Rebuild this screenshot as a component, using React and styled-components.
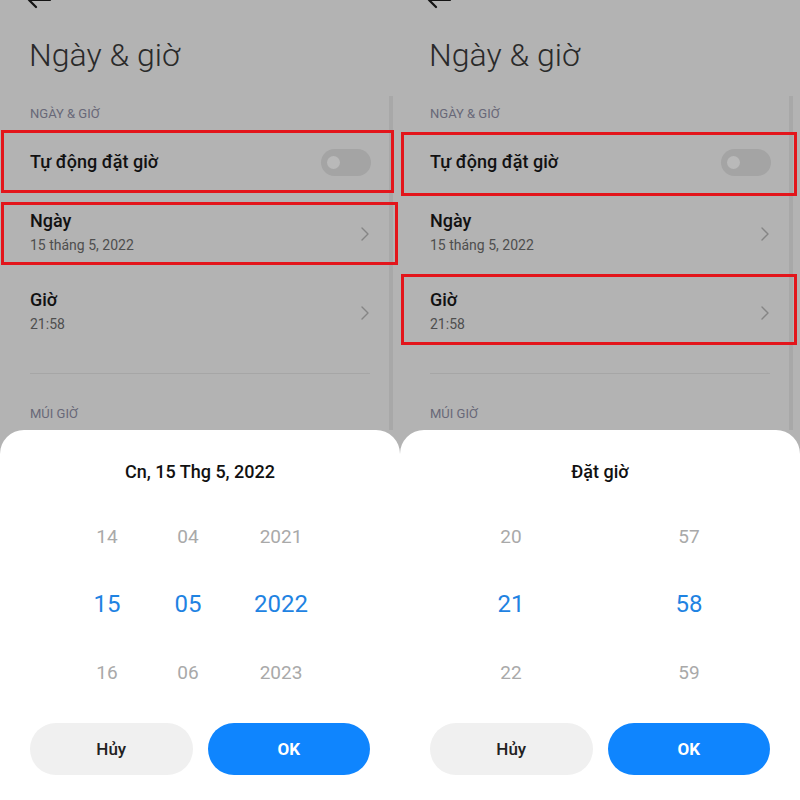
import React from 'react'
import styled, { createGlobalStyle } from 'styled-components'

const GlobalStyle = createGlobalStyle`
  body {
    margin: 0;
    font-family: Roboto, "Noto Sans", sans-serif;
  }
`;

const panels = [
  {
    sheetTitle: 'Cn, 15 Thg 5, 2022',
    boxes: { toggle: [0, 1, 1, 6], date: [8, 8, 1, 2] },
    cols: '80px 82px 104px',
    gap: 0,
    wheels: [
      ['14', '15', '16'],
      ['04', '05', '06'],
      ['2021', '2022', '2023'],
    ],
  },
  {
    sheetTitle: 'Đặt giờ',
    boxes: { toggle: [2, -2, 1, 3], time: [1, 7, 1, 3] },
    cols: '120px 120px',
    gap: 58,
    wheels: [
      ['20', '21', '22'],
      ['57', '58', '59'],
    ],
  },
];

export default function App() {
  return (
    <Page>
      <GlobalStyle />
      {panels.map((p, i) => (
        <Phone key={i} data={p} />
      ))}
    </Page>
  )
}

function Chevron() {
  return (
    <svg width="10" height="14" viewBox="0 0 10 14">
      <path d="M2 1 L8 7 L2 13" fill="none" stroke="#858585" strokeWidth="1.4" strokeLinecap="round" strokeLinejoin="round" />
    </svg>
  )
}

function Phone({ data }) {
  const { boxes } = data;
  return (
    <Panel>
      <TopBar>
        <svg width="28" height="24" viewBox="0 0 28 24">
          <path d="M3 12 H24 M3 12 L10 5 M3 12 L10 19" fill="none" stroke="#141414" strokeWidth="2.2" strokeLinecap="round" />
        </svg>
      </TopBar>
      <Title>Ngày &amp; giờ</Title>
      <SectionLabel $top={29}>NGÀY &amp; GIỜ</SectionLabel>

      <Row $h={64} $top={6}>
        <RowTitle>Tự động đặt giờ</RowTitle>
        <Toggle />
        {boxes.toggle && <Highlight $b={boxes.toggle} />}
      </Row>
      <Row $h={79}>
        <TextBlock>
          <RowTitle>Ngày</RowTitle>
          <RowSub>15 tháng 5, 2022</RowSub>
        </TextBlock>
        <Chevron />
        {boxes.date && <Highlight $b={boxes.date} />}
      </Row>
      <Row $h={79}>
        <TextBlock>
          <RowTitle>Giờ</RowTitle>
          <RowSub>21:58</RowSub>
        </TextBlock>
        <Chevron />
        {boxes.time && <Highlight $b={boxes.time} />}
      </Row>

      <Divider />
      <SectionLabel $top={30}>MÚI GIỜ</SectionLabel>
      <Scrollbar />

      <Sheet>
        <SheetTitle>{data.sheetTitle}</SheetTitle>
        <Wheels $cols={data.cols} $gap={data.gap}>
          {data.wheels.map((w, i) => (
            <Wheel key={i}>
              {w.map((v, j) => (
                <WheelItem key={j} $active={j === 1}>{v}</WheelItem>
              ))}
            </Wheel>
          ))}
        </Wheels>
        <Buttons>
          <Button>Hủy</Button>
          <Button $primary>OK</Button>
        </Buttons>
      </Sheet>
    </Panel>
  )
}

const Page = styled.div`
  display: flex;
  width: 800px;
  height: 800px;
`;

const Panel = styled.div`
  position: relative;
  width: 400px;
  height: 800px;
  display: flex;
  flex-direction: column;
  background: #b3b3b3;
  overflow: hidden;
`;

const TopBar = styled.div`
  height: 35px;
  svg {
    display: block;
    margin: -12px 0 0 26px;
  }
`;

const Title = styled.h1`
  margin: 0;
  padding-left: 29px;
  font-size: 32px;
  line-height: 40px;
  font-weight: 300;
  color: #2a2a2a;
`;

const SectionLabel = styled.div`
  margin-top: ${p => p.$top}px;
  padding-left: 30px;
  font-size: 13px;
  line-height: 20px;
  color: #686878;
`;

const Row = styled.div`
  position: relative;
  height: ${p => p.$h}px;
  margin-top: ${p => p.$top || 0}px;
  display: flex;
  align-items: center;
  justify-content: space-between;
  padding: 0 30px 0 30px;
  flex-shrink: 0;
`;

const TextBlock = styled.div`
  margin-top: -4px;
`;

const RowTitle = styled.div`
  font-size: 18px;
  line-height: 22px;
  font-weight: 500;
  color: #111;
`;

const RowSub = styled.div`
  margin-top: 4px;
  font-size: 14px;
  line-height: 18px;
  color: #4e4e4e;
`;

const Toggle = styled.div`
  position: relative;
  width: 50px;
  height: 27px;
  border-radius: 14px;
  background: #a4a4a4;
  margin-right: -1px;
  &::after {
    content: '';
    position: absolute;
    left: 6px;
    top: 7px;
    width: 13px;
    height: 13px;
    border-radius: 50%;
    background: #b9b9b9;
  }
`;

const Highlight = styled.div`
  position: absolute;
  top: ${p => p.$b[0]}px;
  bottom: ${p => p.$b[1]}px;
  left: ${p => p.$b[2]}px;
  right: ${p => p.$b[3]}px;
  border: 3px solid #e3151b;
  pointer-events: none;
  z-index: 2;
`;

const Divider = styled.div`
  margin: 21px 30px 0;
  height: 1px;
  background: #a6a6a6;
`;

const Scrollbar = styled.div`
  position: absolute;
  top: 96px;
  bottom: 370px;
  right: 7px;
  width: 4px;
  background: #a8a8a8;
`;

const Sheet = styled.div`
  margin-top: 6px;
  flex: 1;
  background: #fff;
  border-radius: 24px 24px 0 0;
  display: flex;
  flex-direction: column;
  align-items: center;
  position: relative;
  z-index: 1;
`;

const SheetTitle = styled.div`
  margin-top: 30px;
  font-size: 18px;
  line-height: 24px;
  font-weight: 500;
  color: #111;
`;

const Wheels = styled.div`
  margin-top: 18px;
  display: grid;
  grid-template-columns: ${p => p.$cols};
  column-gap: ${p => p.$gap}px;
`;

const Wheel = styled.div`
  display: flex;
  flex-direction: column;
`;

const WheelItem = styled.div`
  height: 68px;
  display: flex;
  align-items: center;
  justify-content: center;
  font-size: ${p => (p.$active ? '24px' : '19px')};
  font-weight: 400;
  color: ${p => (p.$active ? '#1f83e2' : '#a9a9a9')};
`;

const Buttons = styled.div`
  margin-top: 17px;
  display: flex;
  gap: 15px;
  padding: 0 30px;
  width: 100%;
  box-sizing: border-box;
`;

const Button = styled.button`
  flex: 1;
  height: 52px;
  border: none;
  border-radius: 26px;
  background: ${p => (p.$primary ? '#0f85fe' : '#f0f0f0')};
  color: ${p => (p.$primary ? '#fff' : '#222')};
  font-family: Roboto, sans-serif;
  font-size: 17px;
  font-weight: ${p => (p.$primary ? 700 : 500)};
`;
